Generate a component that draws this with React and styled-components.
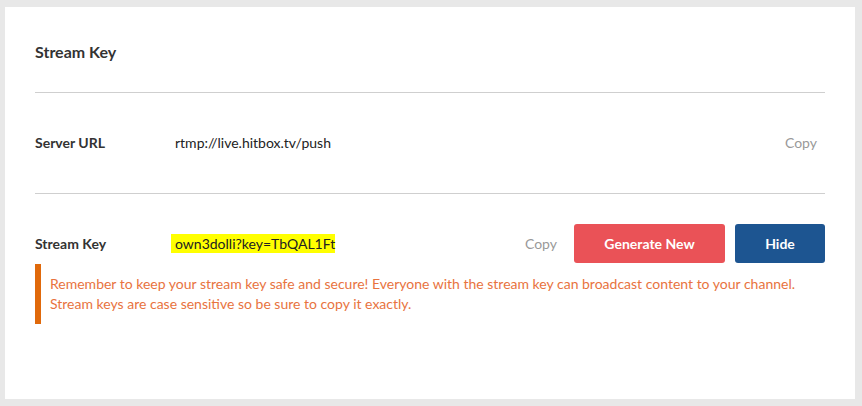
import React from "react";
import styled, { createGlobalStyle } from "styled-components";

const Global = createGlobalStyle`
  html, body { margin: 0; padding: 0; background: #e8e8e8; }
  body { font-family: Lato, "Open Sans", sans-serif; }
`;

const Page = styled.div`
  padding: 7px 7px 7px 5px;
`;

const Card = styled.section`
  background: #fff;
  padding: 30px 30px 30px;
  height: 392px;
  box-sizing: border-box;
`;

const Title = styled.h2`
  margin: 0;
  font-size: 16px;
  font-weight: 700;
  color: #333;
  line-height: 30px;
  padding-bottom: 25px;
  border-bottom: 1px solid #cfcfcf;
`;

const Row = styled.div`
  display: flex;
  align-items: center;
  height: ${(p) => p.$h}px;
  padding-top: ${(p) => p.$pt || 0}px;
  padding-bottom: ${(p) => p.$pb || 0}px;
  border-bottom: ${(p) => (p.$divider ? "1px solid #cfcfcf" : "none")};
`;

const Label = styled.div`
  width: 140px;
  flex: none;
  font-size: 14px;
  font-weight: 700;
  color: #333;
`;

const Value = styled.div`
  flex: 1;
  font-size: 14px;
  color: #222;
`;

const Mark = styled.mark`
  background: #ffff00;
  color: #222;
  padding: 1px 0 1px 4px;
  margin-left: -4px;
`;

const CopyLink = styled.button`
  border: 0;
  background: none;
  padding: 0;
  font-family: inherit;
  font-size: 14px;
  color: #999;
  cursor: pointer;
  margin-right: ${(p) => p.$mr || 0}px;
`;

const Button = styled.button`
  border: 0;
  border-radius: 3px;
  height: 39px;
  width: ${(p) => p.$w}px;
  margin-left: ${(p) => p.$ml || 0}px;
  background: ${(p) => p.$bg};
  color: #fff;
  font-family: inherit;
  font-size: 14px;
  font-weight: 700;
  cursor: pointer;
`;

const Warning = styled.div`
  margin-top: 1px;
  border-left: 6px solid #e0690b;
  padding: 10px 0 10px 9px;
  font-size: 14px;
  line-height: 20px;
  color: #e8733e;
`;

export default function App() {
  return (
    <>
      <Global />
      <Page>
        <Card>
          <Title>Stream Key</Title>
          <Row $h={98} $pb={2} $divider>
            <Label>Server URL</Label>
            <Value>rtmp://live.hitbox.tv/push</Value>
            <CopyLink $mr={8}>Copy</CopyLink>
          </Row>
          <Row $h={39} $pt={30}>
            <Label>Stream Key</Label>
            <Value>
              <Mark>own3dolli?key=TbQAL1Ft</Mark>
            </Value>
            <CopyLink $mr={17}>Copy</CopyLink>
            <Button $w={151} $bg="#ea5257">Generate New</Button>
            <Button $w={90} $ml={10} $bg="#1d5591">Hide</Button>
          </Row>
          <Warning>
            Remember to keep your stream key safe and secure! Everyone with the stream key can broadcast content to your channel.
            <br />
            Stream keys are case sensitive so be sure to copy it exactly.
          </Warning>
        </Card>
      </Page>
    </>
  );
}
